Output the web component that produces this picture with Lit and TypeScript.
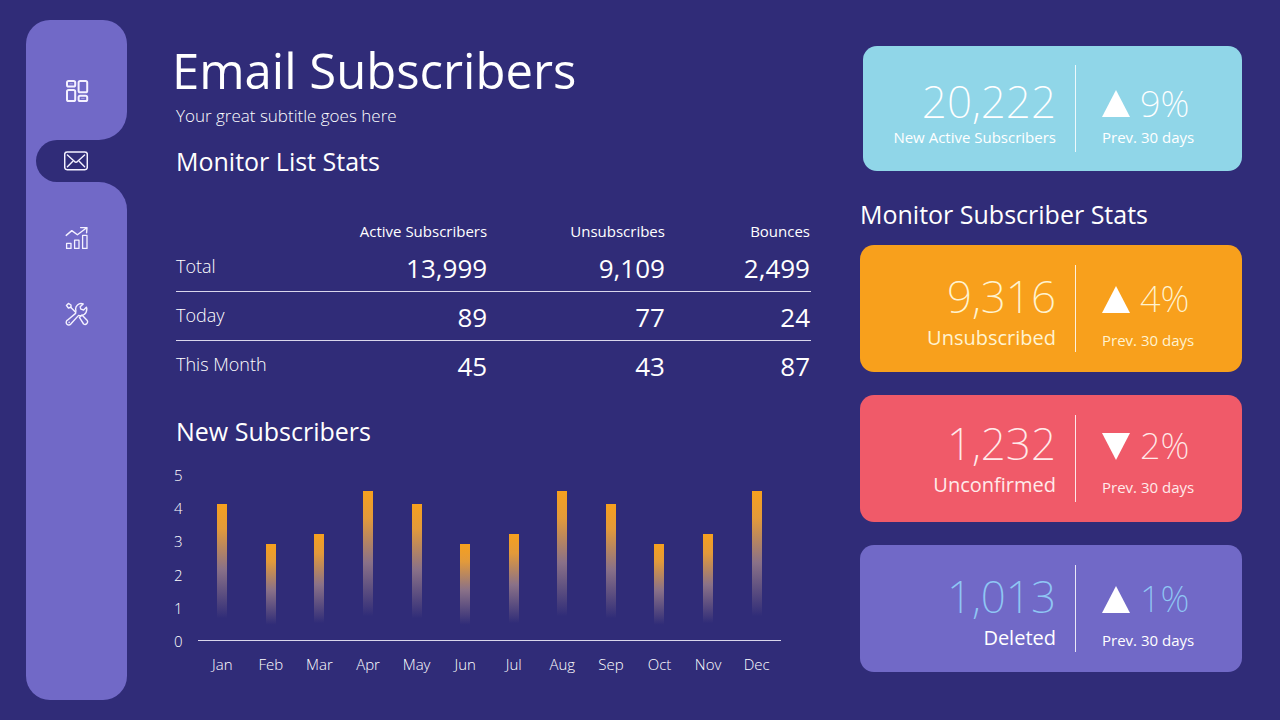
import { LitElement, html, css, svg } from "lit";
import { customElement, property } from "lit/decorators.js";
import { styleMap } from "lit/directives/style-map.js";
import { classMap } from "lit/directives/class-map.js";

interface ListRow {
  label: string;
  active: string;
  unsubscribes: string;
  bounces: string;
}

interface MonthValue {
  month: string;
  value: number;
}

const LIST_ROWS: ListRow[] = [
  { label: "Total", active: "13,999", unsubscribes: "9,109", bounces: "2,499" },
  { label: "Today", active: "89", unsubscribes: "77", bounces: "24" },
  { label: "This Month", active: "45", unsubscribes: "43", bounces: "87" },
];

const MONTHS: MonthValue[] = [
  { month: "Jan", value: 4.1 },
  { month: "Feb", value: 2.9 },
  { month: "Mar", value: 3.2 },
  { month: "Apr", value: 4.5 },
  { month: "May", value: 4.1 },
  { month: "Jun", value: 2.9 },
  { month: "Jul", value: 3.2 },
  { month: "Aug", value: 4.5 },
  { month: "Sep", value: 4.1 },
  { month: "Oct", value: 2.9 },
  { month: "Nov", value: 3.2 },
  { month: "Dec", value: 4.5 },
];

const SCALE_MAX = 5;

const dashboardIcon = svg`
  <rect x="2" y="2" width="8.2" height="5.5" rx="1.6" stroke-width="2"/>
  <rect x="2" y="10.9" width="8.2" height="11.1" rx="1.6" stroke-width="2"/>
  <rect x="13.6" y="2" width="8.6" height="11.3" rx="1.6" stroke-width="2"/>
  <rect x="13.6" y="16.8" width="8.6" height="5.2" rx="1.6" stroke-width="2"/>
  <path d="M5 4.8 H7.4 M16.6 19.4 H19.2" stroke-width="0.8" stroke-opacity="0.5"/>`;

const mailIcon = svg`
  <rect x="0.7" y="2.9" width="22.6" height="17.8" rx="2.4" stroke-width="1.5"/>
  <path d="M3.4 6 L10.6 12.6 Q12 13.8 13.4 12.6 L20.6 6 M3.4 17.8 L8.6 12.6 M20.6 17.8 L15.4 12.6" stroke-width="1.4"/>`;

const growthIcon = svg`
  <path d="M1.2 9.4 L6.8 4.6 L12.4 8.8 L21.4 2 M15.6 1.6 L22 1.6 L21.6 6.8" stroke-width="1.4"/>
  <rect x="1.6" y="17.4" width="4.4" height="5" stroke-width="1.3"/>
  <rect x="9.6" y="14.2" width="4.4" height="8.2" stroke-width="1.3"/>
  <rect x="17.6" y="9.4" width="4.4" height="13" stroke-width="1.3"/>`;

const toolsIcon = svg`
  <path d="M10.6 11.4 L2.4 18.2 A2.6 2.6 0 1 0 6 21.8 L13.6 13.4 C17.4 14.6 22 12 21.8 6.6 L21.4 5.2 L18.6 8 L15.8 7.2 L15.2 4.8 L18.2 2 C14 .4 9.6 4 10.9 8.4 Z" stroke-width="1.4"/>
  <path d="M14.4 15.4 L17 12.9 L22 18.2 A2.6 2.6 0 0 1 18.6 22 Z" stroke-width="1.4"/>
  <path d="M5.4 5 L10.4 10" stroke-width="1.4"/>
  <path d="M1.4 3.4 L3.4 1.4 L6 3 L6 5.4 L3.4 6 Z" stroke-width="1.4"/>
  <path d="M4.1 20.4 L4.2 20.3" stroke-width="1.4"/>`;

@customElement("side-nav")
export class SideNav extends LitElement {
  static styles = css`
    :host {
      display: flex;
    }
    .nav {
      flex: 1;
      display: flex;
      flex-direction: column;
    }
    .top,
    .bottom {
      display: flex;
      flex-direction: column;
      align-items: center;
      background: var(--violet);
    }
    .top {
      height: 120px;
      padding-top: 22px;
      box-sizing: border-box;
      justify-content: center;
      border-radius: 24px 24px 28px 0;
    }
    .middle {
      padding-left: 10px;
      background: linear-gradient(to right, var(--violet) 32px, transparent 32px);
    }
    .current {
      display: flex;
      align-items: center;
      height: 42px;
      padding-left: 18px;
      border-radius: 21px 0 0 21px;
      background: var(--ink);
    }
    .bottom {
      flex: 1;
      gap: 32px;
      padding-top: 34px;
      border-radius: 0 28px 24px 24px;
    }
    .link {
      display: grid;
      place-items: center;
      width: 44px;
      height: 44px;
      color: #f4f1ff;
    }
    .icon {
      width: 24px;
      height: 24px;
      fill: none;
      stroke: currentColor;
      stroke-linecap: round;
      stroke-linejoin: round;
    }
  `;

  private link(label: string, icon: unknown, current = false) {
    return html`<a
      class="link"
      href="#"
      aria-label=${label}
      aria-current=${current ? "page" : "false"}
      ><svg class="icon" viewBox="0 0 24 24" aria-hidden="true">${icon}</svg></a
    >`;
  }

  render() {
    return html`
      <nav class="nav" aria-label="Main">
        <div class="top">${this.link("Dashboard", dashboardIcon)}</div>
        <div class="middle">
          <div class="current">${this.link("Email", mailIcon, true)}</div>
        </div>
        <div class="bottom">
          ${this.link("Growth", growthIcon)} ${this.link("Tools", toolsIcon)}
        </div>
      </nav>
    `;
  }
}

@customElement("list-stats")
export class ListStats extends LitElement {
  static styles = css`
    :host {
      display: block;
    }
    .table {
      width: 100%;
      border-collapse: collapse;
      table-layout: fixed;
    }
    .label-col {
      width: 21%;
    }
    .number-col {
      width: 28%;
    }
    .head {
      height: 24px;
      padding: 0;
      font-size: 15px;
      line-height: 24px;
      font-weight: 400;
      text-align: right;
      white-space: nowrap;
    }
    .label {
      height: 46px;
      padding: 0 0 2px;
      font-size: 18px;
      line-height: 24px;
      font-weight: 300;
      text-align: left;
      white-space: nowrap;
    }
    .value {
      padding: 2px 0 0;
      font-size: 26px;
      line-height: 36px;
      text-align: right;
    }
    .head:last-child,
    .value:last-child {
      padding-right: 1px;
    }
    .row + .row {
      border-top: 1px solid #d9d6ec;
    }
  `;

  render() {
    return html`
      <table class="table" aria-label="Monitor List Stats">
        <colgroup>
          <col class="label-col" />
          <col class="number-col" />
          <col class="number-col" />
          <col />
        </colgroup>
        <thead>
          <tr>
            <td></td>
            <th class="head" scope="col">Active Subscribers</th>
            <th class="head" scope="col">Unsubscribes</th>
            <th class="head" scope="col">Bounces</th>
          </tr>
        </thead>
        <tbody>
          ${LIST_ROWS.map(
            (row) => html`
              <tr class="row">
                <th class="label" scope="row">${row.label}</th>
                <td class="value">${row.active}</td>
                <td class="value">${row.unsubscribes}</td>
                <td class="value">${row.bounces}</td>
              </tr>
            `
          )}
        </tbody>
      </table>
    `;
  }
}

@customElement("month-chart")
export class MonthChart extends LitElement {
  static styles = css`
    :host {
      display: grid;
      grid-template-columns: 24px 1fr;
      font-size: 15px;
      line-height: 20px;
      font-weight: 300;
    }
    .scale {
      display: flex;
      flex-direction: column;
      justify-content: space-between;
      height: 186px;
    }
    .plot {
      display: flex;
      height: 166px;
      margin-top: 9px;
      border-bottom: 1px solid #d9d6ec;
    }
    .slot,
    .month {
      flex: 1;
      display: flex;
      justify-content: center;
      align-items: flex-end;
    }
    .bar {
      width: 10px;
      background: linear-gradient(
        #f7a01e 0%,
        #e39a3a 18%,
        rgba(160, 130, 140, 0.8) 48%,
        rgba(111, 105, 198, 0) 84%
      );
    }
    .months {
      grid-column: 2;
      display: flex;
      margin-top: 3px;
    }
  `;

  render() {
    const ticks = Array.from({ length: SCALE_MAX + 1 }, (_, i) => SCALE_MAX - i);
    return html`
      <div class="scale">${ticks.map((tick) => html`<span>${tick}</span>`)}</div>
      <div class="plot">
        ${MONTHS.map(
          ({ value }) => html`
            <div class="slot">
              <div
                class="bar"
                style=${styleMap({ height: `${(value / SCALE_MAX) * 100}%` })}
              ></div>
            </div>
          `
        )}
      </div>
      <div class="months">
        ${MONTHS.map(({ month }) => html`<span class="month">${month}</span>`)}
      </div>
    `;
  }
}

@customElement("stat-card")
export class StatCard extends LitElement {
  @property() value = "";
  @property() label = "";
  @property() change = "";
  @property() trend: "up" | "down" = "up";
  @property() tone = "orange";

  static styles = css`
    :host {
      display: block;
    }
    .card {
      display: grid;
      grid-template-columns: 1fr 166px;
      align-items: center;
      height: 127px;
      border-radius: 14px;
      color: #fff;
    }
    .orange {
      background: #f8a01c;
      color: #fff3d0;
    }
    .coral {
      background: #f05a69;
      color: #ffeaea;
    }
    .violet {
      background: var(--violet);
    }
    .sky {
      height: 125px;
      background: #90d6e8;
    }
    .total {
      display: flex;
      flex-direction: column;
      align-items: flex-end;
      justify-content: center;
      box-sizing: border-box;
      height: 87px;
      padding: 2px 19px 0 0;
      border-right: 1px solid rgba(255, 255, 255, 0.85);
    }
    .value {
      font-family: "Noto Sans", "Open Sans", sans-serif;
      font-size: 44px;
      line-height: 56px;
      font-weight: 200;
    }
    .label {
      font-size: 20px;
      line-height: 28px;
    }
    .trend {
      display: flex;
      flex-direction: column;
      padding: 10px 0 0 26px;
    }
    .delta {
      display: flex;
      align-items: center;
      gap: 10px;
    }
    .arrow {
      width: 28px;
      height: 27px;
      fill: #fff;
    }
    .change {
      font-family: "Noto Sans", "Open Sans", sans-serif;
      font-size: 36px;
      line-height: 48px;
      font-weight: 200;
    }
    .period {
      padding-top: 5px;
      font-size: 15px;
      line-height: 24px;
    }
    .coral .total {
      padding-top: 0;
      padding-bottom: 3px;
    }
    .coral .trend {
      padding-top: 4px;
    }
    .violet .value,
    .violet .change {
      color: #8fc6f4;
    }
    .sky .total {
      padding-top: 8px;
    }
    .sky .value {
      line-height: 48px;
    }
    .sky .label {
      font-size: 15px;
      line-height: 24px;
    }
    .sky .trend {
      padding-top: 14px;
    }
    .sky .change {
      line-height: 42px;
    }
    .sky .period {
      padding-top: 0;
    }
  `;

  render() {
    const arrow = this.trend === "up" ? "0,27 14,0 28,27" : "0,0 28,0 14,27";
    return html`
      <article class=${classMap({ card: true, [this.tone]: true })}>
        <div class="total">
          <span class="value">${this.value}</span>
          <span class="label">${this.label}</span>
        </div>
        <div class="trend">
          <div class="delta">
            <svg class="arrow" viewBox="0 0 28 27" role="img" aria-label=${this.trend}>
              <polygon points=${arrow}></polygon>
            </svg>
            <span class="change">${this.change}</span>
          </div>
          <span class="period">Prev. 30 days</span>
        </div>
      </article>
    `;
  }
}

@customElement("app-root")
export class AppRoot extends LitElement {
  static styles = css`
    :host {
      --ink: #302c78;
      --violet: #7169c7;
      display: grid;
      grid-template-columns: 101px minmax(0, 1fr) minmax(0, 382px);
      column-gap: 49px;
      box-sizing: border-box;
      min-height: 100vh;
      padding: 20px 38px 20px 26px;
      background: var(--ink);
      color: #fff;
      font-family: "Open Sans", "Noto Sans", sans-serif;
    }
    .main {
      padding-top: 16px;
    }
    .title {
      margin: 0 0 0 -4px;
      font-size: 49px;
      line-height: 68px;
      font-weight: 400;
    }
    .subtitle {
      margin: 0;
      font-size: 17px;
      line-height: 24px;
      font-weight: 300;
    }
    .heading {
      margin: 0;
      font-size: 25px;
      line-height: 36px;
      font-weight: 400;
    }
    .list-heading {
      margin-top: 15px;
    }
    .table {
      margin-top: 40px;
    }
    .chart-heading {
      margin-top: 24px;
    }
    .chart {
      margin: 16px 30px 0 -2px;
    }
    .side {
      display: flex;
      flex-direction: column;
      gap: 23px;
      padding-top: 26px;
    }
    .featured {
      margin-left: 3px;
    }
    .side-heading {
      margin: 2px 0 -10px;
    }
  `;

  render() {
    return html`
      <side-nav></side-nav>
      <main class="main">
        <h1 class="title">Email Subscribers</h1>
        <p class="subtitle">Your great subtitle goes here</p>
        <h2 class="heading list-heading">Monitor List Stats</h2>
        <list-stats class="table"></list-stats>
        <h2 class="heading chart-heading">New Subscribers</h2>
        <month-chart class="chart"></month-chart>
      </main>
      <aside class="side">
        <stat-card
          class="featured"
          value="20,222"
          label="New Active Subscribers"
          change="9%"
          tone="sky"
        ></stat-card>
        <h2 class="heading side-heading">Monitor Subscriber Stats</h2>
        <stat-card value="9,316" label="Unsubscribed" change="4%" tone="orange"></stat-card>
        <stat-card
          value="1,232"
          label="Unconfirmed"
          change="2%"
          trend="down"
          tone="coral"
        ></stat-card>
        <stat-card value="1,013" label="Deleted" change="1%" tone="violet"></stat-card>
      </aside>
    `;
  }
}
